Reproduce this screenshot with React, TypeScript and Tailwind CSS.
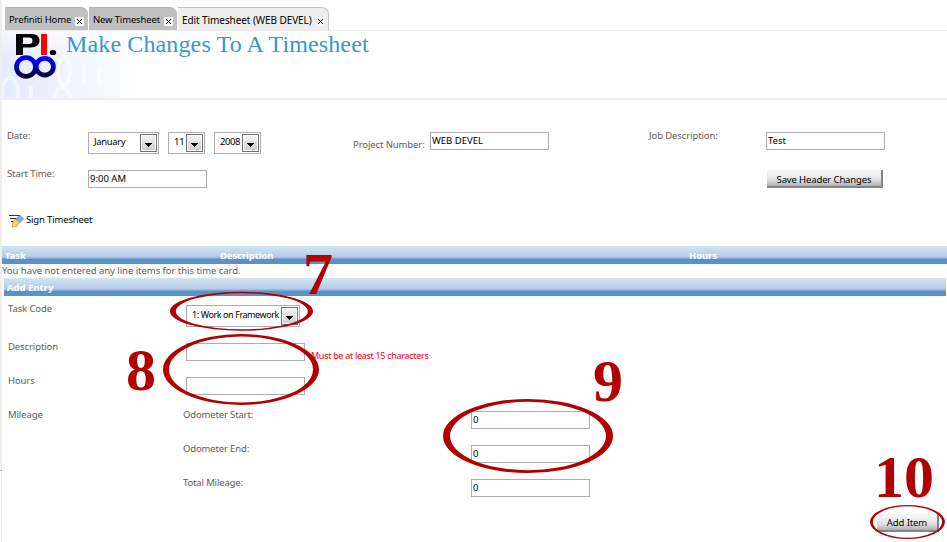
import React from 'react';

const cx = (...c: (string | undefined)[]) => c.filter(Boolean).join(' ');

function Text({ className, size = 'text-[9.5px] tracking-[-0.1px]', children }: { className?: string; size?: string; children?: React.ReactNode }) {
  return <span className={cx('block whitespace-nowrap leading-[12px]', size, className)}>{children}</span>;
}

function Field({ value }: { value?: string }) {
  return (
    <div className="h-[18px] w-[119px] shrink-0 border border-[#abadb3] bg-white pl-px pt-[2px] text-black">
      <Text size="text-[9.5px]">{value}</Text>
    </div>
  );
}

function Select({ value, className, size }: { value: string; className?: string; size?: string }) {
  return (
    <div className={cx('flex h-[22px] shrink-0 justify-between border border-[#abadb3] bg-white pl-[5px] pr-px pt-px text-black', className)}>
      <Text className="pt-[2px]" size={size}>{value}</Text>
      <span className="flex h-[18px] w-[17px] shrink-0 items-center justify-center border border-[#707070] bg-white p-px">
        <span className="flex h-full w-full items-center justify-center bg-linear-to-b from-[#f2f2f2] to-[#cfcfcf] pt-[3px]">
          <svg width="7" height="4" viewBox="0 0 7 4" shapeRendering="crispEdges"><path d="M0 0h7L3.5 4z" /></svg>
        </span>
      </span>
    </div>
  );
}

function Tab({ label, active, className, size }: { label: string; active?: boolean; className?: string; size?: string }) {
  return (
    <div className={cx('flex h-[23px] shrink-0 items-start rounded-tr-[7px] border-t', active ? 'border-r border-[#c4c4c4] bg-[#eeeeee]' : 'border-[#b4b4b4] bg-[#c0c0c0]', className)}>
      <Text className="pt-[6px] text-black" size={size}>{label}</Text>
      <span className="ml-auto mt-[9px] flex h-[9px] w-[9px] items-center justify-center bg-[#f6f6f6]">
        <svg width="5" height="5" viewBox="0 0 5 5"><path d="M0 0l5 5M5 0L0 5" stroke="#000" strokeWidth="1" /></svg>
      </span>
    </div>
  );
}

function Button({ label, className, size }: { label: string; className?: string; size?: string }) {
  return (
    <div className={cx('flex h-[18px] shrink-0 justify-center border-b-2 border-r-2 border-[#858585] bg-linear-to-b from-[#f6f6f6] from-10% via-[#e3e3e3] via-60% to-[#b0b0b0] pt-[3px] text-black', className)}>
      <Text size={size}>{label}</Text>
    </div>
  );
}

const BAR = 'flex h-[18px] shrink-0 bg-linear-to-b from-[#d5e4f2] from-0% via-[#b3cce8] via-60% to-[#5a92c8] to-75% pt-[4px] font-bold text-white';

function Logo() {
  return (
    <svg width="44" height="48" viewBox="0 0 44 48" className="shrink-0">
      <defs>
        <linearGradient id="loop" x1="0" y1="23" x2="0" y2="46" gradientUnits="userSpaceOnUse">
          <stop offset="0" stopColor="#0000ff" /><stop offset=".4" stopColor="#0000e0" /><stop offset="1" stopColor="#000018" />
        </linearGradient>
      </defs>
      <path fillRule="evenodd" d="M3 2h15c6 0 8.500 2.500 8.500 6.500s-3 7-9 7H10v7.500H3zM10 5.500v6.500h6c2.500 0 3.500-1 3.500-3.300s-1-3.200-3.500-3.200z" />
      <path d="M28 2h6v21h-6z" fill="#f00" />
      <ellipse cx="40" cy="20.500" rx="3.200" ry="2.600" />
      <ellipse cx="13" cy="35" rx="9.500" ry="9.300" fill="none" stroke="url(#loop)" strokeWidth="4.700" />
      <ellipse cx="31.800" cy="34.700" rx="8.600" ry="8.400" fill="none" stroke="url(#loop)" strokeWidth="4.700" />
    </svg>
  );
}

function HeaderArt() {
  return (
    <svg width="150" height="67" className="absolute left-0 top-0">
      <defs>
        <linearGradient id="haze" x1="0" y1="45" x2="145" y2="30" gradientUnits="userSpaceOnUse">
          <stop offset="0" stopColor="#e3ebfd" /><stop offset=".45" stopColor="#eff3fe" /><stop offset=".95" stopColor="#fff" />
        </linearGradient>
        <linearGradient id="glow" x1="0" y1="0" x2="0" y2="30" gradientUnits="userSpaceOnUse">
          <stop offset="0" stopColor="#fff" stopOpacity=".6" /><stop offset="1" stopColor="#fff" stopOpacity="0" />
        </linearGradient>
      </defs>
      <rect width="150" height="67" fill="url(#haze)" />
      <rect width="150" height="67" fill="url(#glow)" />
      <g fill="none" stroke="#fff" strokeOpacity=".5" strokeWidth="4">
        <ellipse cx="8" cy="61" rx="8" ry="14" />
        <ellipse cx="62" cy="40" rx="6" ry="14" />
        <ellipse cx="60" cy="68" rx="8" ry="11" />
        <path d="M29 55v14M82 24v28M97 36v18" />
      </g>
    </svg>
  );
}

function SignIcon() {
  return (
    <svg width="15" height="14" viewBox="0 0 15 14">
      <path d="M0 1.500h11M1 4.500h8M2 7.500h4" stroke="#333" strokeWidth="1.200" />
      <path d="M7.500 4.500L11 1.500l3.500 3.500-4 4-2.500-1z" fill="#82aeea" stroke="#4a7fc8" strokeWidth=".8" />
      <path d="M6.500 5l3.500 3.500-2 3.500-5 1.200 1-5z" fill="#ffd75e" stroke="#c99a27" strokeWidth=".8" />
    </svg>
  );
}

const ring = (x: number, y: number, rx: number, ry: number) =>
  `M${x - rx} ${y}a${rx} ${ry} 0 1 0 ${rx * 2} 0a${rx} ${ry} 0 1 0 ${-rx * 2} 0z`;

function Annotations() {
  return (
    <svg width="947" height="542" className="pointer-events-none absolute left-0 top-0" fill="#b20000">
      <g fillRule="evenodd">
        <path d={ring(241.5, 311.3, 71.500, 19.500) + ring(241.8, 311.3, 66, 18)} />
        <path d={ring(241, 369.500, 78, 35.500) + ring(241, 369.500, 72, 33)} />
        <path d={ring(528, 436, 85, 37) + ring(528, 436, 78, 34.200)} />
        <path d={ring(907.500, 522, 37.500, 17) + ring(907.500, 522, 34.700, 15.700)} />
      </g>
      <g className="font-['Liberation_Serif'] text-[60px] font-bold">
        <text x="303" y="294">7</text>
        <text x="126" y="389.500">8</text>
        <text x="593" y="401">9</text>
        <text x="874" y="497">10</text>
      </g>
    </svg>
  );
}

export default function App() {
  return (
    <div className="relative flex h-[542px] w-[947px] overflow-hidden bg-white font-['Noto_Sans',sans-serif] text-[#5c5c5c]">
      <div className="flex w-[2px] shrink-0 flex-col">
        <div className="h-[470px] bg-[#eeeeee]" />
        <div className="h-px bg-[#bbb]" />
        <div className="ml-px flex-1 bg-[#eeeeee]" />
      </div>
      <main className="flex w-[945px] shrink-0 flex-col">
        <nav className="flex h-[31px] shrink-0 items-start border-b border-[#eeeeee] pl-[3px] pt-[7px]">
          <Tab label="Prefiniti Home" className="w-[83px] pl-[4px] pr-[4px]" size="text-[9.5px] tracking-[-0.15px]" />
          <Tab label="New Timesheet" className="ml-px w-[88px] pl-[4px] pr-[4px]" size="text-[9.5px] tracking-[-0.15px]" />
          <Tab label="Edit Timesheet (WEB DEVEL)" active className="ml-px w-[151px] pl-[4px] pr-[3px]" size="text-[10px] tracking-[-0.08px]" />
        </nav>
        <header className="relative flex h-[69px] shrink-0 items-start border-b-2 border-[#eeeeee] pl-[11px]">
          <HeaderArt />
          <div className="relative flex pt-px">
            <Logo />
            <h1 className="ml-[9px] -mt-px whitespace-nowrap font-['Liberation_Serif',serif] text-[24px] leading-[26px] tracking-[0.13px] text-[#3399cc]">Make Changes To A Timesheet</h1>
          </div>
        </header>

        <section className="flex h-[70px] shrink-0 pt-[32px]">
          <Text className="-mt-[2px] w-[81px] pl-[5px]">Date:</Text>
          <div className="flex w-[270px] pl-[5px]">
            <Select value="January" className="w-[71px]" size="text-[9.5px] tracking-[-0.35px]" />
            <Select value="11" className="ml-[9px] w-[37px]" size="text-[9.5px] tracking-[-0.3px]" />
            <Select value="2008" className="ml-[9px] w-[47px]" size="text-[9.5px] tracking-[-0.4px]" />
          </div>
          <Text className="w-[77px] shrink-0 pt-[7px]">Project Number:</Text>
          <Field value="WEB DEVEL" />
          <Text className="-mt-[2px] ml-[100px] w-[117px]">Job Description:</Text>
          <Field value="Test" />
        </section>
        <section className="flex h-[44px] shrink-0">
          <Text className="-mt-[2px] w-[86px] pl-[5px]">Start Time:</Text>
          <Field value="9:00 AM" />
          <Button label="Save Header Changes" className="ml-[560px] w-[116px] pt-[4px]" size="text-[9.5px] tracking-[-0.13px]" />
        </section>
        <div className="flex h-[32px] shrink-0 pl-[7px] text-black">
          <SignIcon />
          <Text className="ml-[2px]" size="text-[9.5px] tracking-[-0.15px]">Sign Timesheet</Text>
        </div>
        <div className={BAR}>
          <Text className="w-[218px] pl-[3px]">Task</Text>
          <Text className="w-[469px]">Description</Text>
          <Text>Hours</Text>
        </div>
        <Text className="h-[14px] shrink-0 pt-px" size="text-[9.5px] tracking-[-0.04px]">You have not entered any line items for this time card.</Text>
        <div className={cx(BAR, 'ml-[2px] mr-px pl-[3px]')}><Text size="text-[9.5px]">Add Entry</Text></div>

        <section className="flex h-[47px] shrink-0 pt-[9px]">
          <Text className="-mt-[2px] w-[184px] pl-[6px]">Task Code</Text>
          <Select value="1: Work on Framework" className="w-[114px]" size="text-[9px] tracking-[-0.42px]" />
        </section>
        <section className="flex h-[34px] shrink-0">
          <Text className="-mt-[2px] w-[184px] pl-[6px]">Description</Text>
          <Field />
          <Text className="ml-[6px] mt-[7px] text-[#ff0000]" size="text-[9px] tracking-[-0.3px]">Must be at least 15 characters</Text>
        </section>
        <section className="flex h-[34px] shrink-0">
          <Text className="-mt-[2px] w-[184px] pl-[6px]">Hours</Text>
          <Field />
        </section>
        <section className="flex shrink-0">
          <Text className="-mt-[2px] w-[181px] pl-[6px]">Mileage</Text>
          <div className="flex flex-col">
            {['Odometer Start:', 'Odometer End:', 'Total Mileage:'].map((t) => (
              <div key={t} className="flex h-[34px]">
                <Text className="-mt-[2px] w-[288px]" size="text-[9.5px] tracking-[-0.15px]">{t}</Text>
                <Field value="0" />
              </div>
            ))}
          </div>
        </section>
        <Button label="Add Item" className="ml-auto mr-[8px] mt-px w-[62px]" />
      </main>
      <Annotations />
    </div>
  );
}
